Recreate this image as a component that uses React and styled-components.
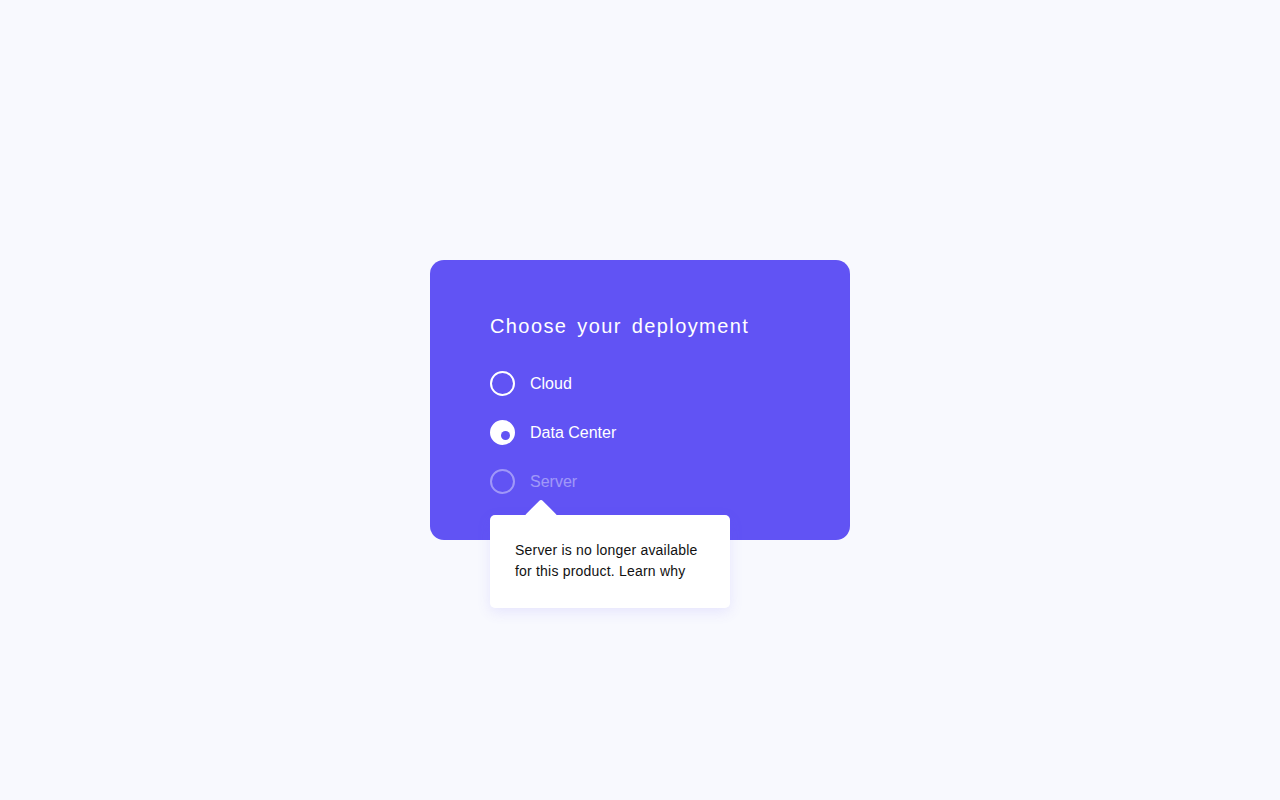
import React from "react";
import styled, { createGlobalStyle } from "styled-components";

const Global = createGlobalStyle`
  html, body { margin: 0; padding: 0; background: #f8f9fe; }
  body { font-family: "Liberation Sans", Arial, sans-serif; }
`;

const Page = styled.div`
  width: 1280px;
  height: 800px;
  display: flex;
  align-items: center;
  justify-content: center;
`;

const Card = styled.div`
  width: 420px;
  height: 280px;
  box-sizing: border-box;
  background: #6153f4;
  border-radius: 14px;
  padding: 52px 60px 0;
  position: relative;
`;

const Title = styled.h2`
  margin: 0 0 31px;
  color: #fff;
  font-size: 20px;
  font-weight: 400;
  letter-spacing: 1.4px;
  word-spacing: 3px;
  line-height: 28px;
`;

const Options = styled.div`
  display: flex;
  flex-direction: column;
  gap: 24px;
`;

const Option = styled.label`
  display: flex;
  align-items: center;
  gap: 15px;
  height: 25px;
  color: #fff;
  font-size: 16px;
  opacity: ${(p) => (p.$disabled ? 0.4 : 1)};
  position: relative;
`;

const Radio = styled.span`
  width: 25px;
  height: 25px;
  box-sizing: border-box;
  border-radius: 50%;
  border: 2px solid #fff;
  background: ${(p) => (p.$checked ? "#fff" : "transparent")};
  position: relative;
  flex: none;
  &::after {
    content: "";
    display: ${(p) => (p.$checked ? "block" : "none")};
    position: absolute;
    width: 9px;
    height: 9px;
    border-radius: 50%;
    background: #6153f4;
    left: 9px;
    top: 9px;
  }
`;

const Tooltip = styled.div`
  position: absolute;
  left: 60px;
  top: 255px;
  width: 240px;
  box-sizing: border-box;
  padding: 25px 25px 26px;
  background: #fff;
  border-radius: 5px;
  box-shadow: 0 4px 14px rgba(97, 83, 244, 0.12);
  color: #111;
  font-size: 14px;
  line-height: 21px;
  letter-spacing: 0.2px;
  &::before {
    content: "";
    position: absolute;
    width: 24px;
    height: 24px;
    background: #fff;
    border-radius: 3px;
    transform: rotate(45deg);
    left: 39px;
    top: -11px;
  }
`;

const TipText = styled.p`
  margin: 0;
  position: relative;
`;

export default function App() {
  return (
    <>
      <Global />
      <Page>
        <Card>
          <Title>Choose your deployment</Title>
          <Options>
            <Option>
              <Radio />
              Cloud
            </Option>
            <Option>
              <Radio $checked />
              Data Center
            </Option>
            <Option $disabled>
              <Radio />
              Server
            </Option>
          </Options>
          <Tooltip>
            <TipText>
              Server is no longer available for this product. Learn why
            </TipText>
          </Tooltip>
        </Card>
      </Page>
    </>
  );
}
